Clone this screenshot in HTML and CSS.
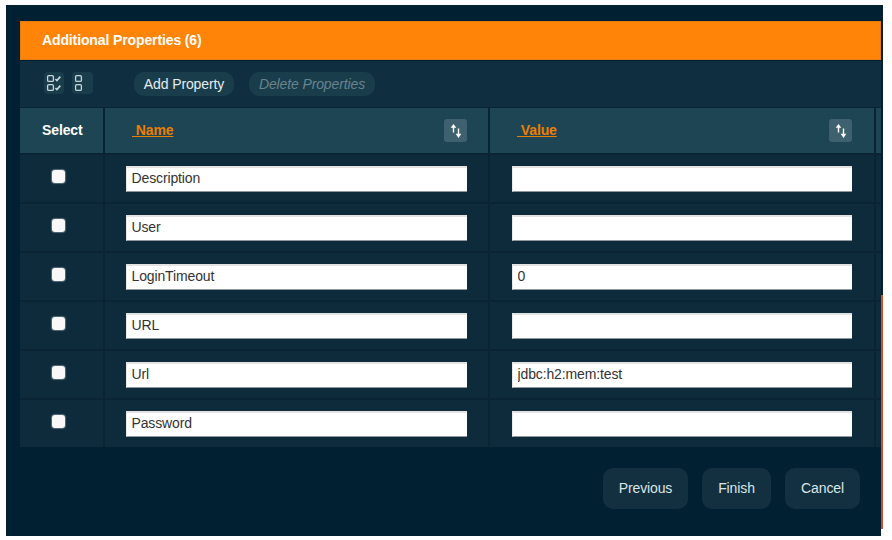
FILE: index.html
```html
<!DOCTYPE html>
<html lang="en">
<head>
<meta charset="utf-8">
<title>Additional Properties</title>
<link rel="stylesheet" href="styles.css">
</head>
<body>
<main class="panel">
  <h2 class="title">Additional Properties (6)</h2>
  <div class="toolbar">
    <button class="icon-btn" type="button" aria-label="Select all">
      <svg width="20" height="22" viewBox="0 0 20 22" fill="none" stroke="#c8d6da">
        <rect x="3.6" y="3.6" width="5.8" height="5.8" rx="1.2" stroke-width="1.3"/>
        <rect x="3.6" y="12.6" width="5.8" height="5.8" rx="1.2" stroke-width="1.3"/>
        <path d="M11.4 7l1.5 1.5 3.4-3.9M11.4 16l1.5 1.5 3.4-3.9" stroke-width="1.7"/>
      </svg>
    </button>
    <button class="icon-btn" type="button" aria-label="Select none">
      <svg width="20" height="22" viewBox="0 0 20 22" fill="none" stroke="#c8d6da" stroke-width="1.3">
        <rect x="3.6" y="3.6" width="5.8" height="5.8" rx="1.2"/>
        <rect x="3.6" y="12.6" width="5.8" height="5.8" rx="1.2"/>
      </svg>
    </button>
    <button class="pill add" type="button">Add Property</button>
    <button class="pill del" type="button">Delete Properties</button>
  </div>
  <div class="grid">
    <div class="cell head select-head">Select</div>
    <div class="cell head sort-head name-head">
      <a class="sort-link" href="#">&nbsp;Name</a>
      <button class="sort-btn" type="button" aria-label="Sort by name">
        <svg width="14" height="16" viewBox="0 0 14 16" fill="#fff" stroke="none">
          <path d="M3.8 9.5V4.5h1.4v5zM4.5 1l2.8 3.8H1.7zM8.8 5.5h1.4v5.5H8.8zM9.5 15l-2.8-4.2h5.6z"/>
        </svg>
      </button>
    </div>
    <div class="cell head sort-head value-head">
      <a class="sort-link" href="#">&nbsp;Value</a>
      <button class="sort-btn" type="button" aria-label="Sort by value">
        <svg width="14" height="16" viewBox="0 0 14 16" fill="#fff" stroke="none">
          <path d="M3.8 9.5V4.5h1.4v5zM4.5 1l2.8 3.8H1.7zM8.8 5.5h1.4v5.5H8.8zM9.5 15l-2.8-4.2h5.6z"/>
        </svg>
      </button>
    </div>
    <div class="cell head"></div>

    <div class="cell check-cell"><input class="check" type="checkbox"></div>
    <div class="cell field-cell"><input class="field" type="text" value="Description"></div>
    <div class="cell field-cell value-cell"><input class="field" type="text" value=""></div>
    <div class="cell"></div>

    <div class="cell check-cell"><input class="check" type="checkbox"></div>
    <div class="cell field-cell"><input class="field" type="text" value="User"></div>
    <div class="cell field-cell value-cell"><input class="field" type="text" value=""></div>
    <div class="cell"></div>

    <div class="cell check-cell"><input class="check" type="checkbox"></div>
    <div class="cell field-cell"><input class="field" type="text" value="LoginTimeout"></div>
    <div class="cell field-cell value-cell"><input class="field" type="text" value="0"></div>
    <div class="cell"></div>

    <div class="cell check-cell"><input class="check" type="checkbox"></div>
    <div class="cell field-cell"><input class="field" type="text" value="URL"></div>
    <div class="cell field-cell value-cell"><input class="field" type="text" value=""></div>
    <div class="cell"></div>

    <div class="cell check-cell"><input class="check" type="checkbox"></div>
    <div class="cell field-cell"><input class="field" type="text" value="Url"></div>
    <div class="cell field-cell value-cell"><input class="field" type="text" value="jdbc:h2:mem:test"></div>
    <div class="cell"></div>

    <div class="cell check-cell"><input class="check" type="checkbox"></div>
    <div class="cell field-cell"><input class="field" type="text" value="Password"></div>
    <div class="cell field-cell value-cell"><input class="field" type="text" value=""></div>
    <div class="cell"></div>
  </div>
  <div class="footer">
    <button class="action prev" type="button">Previous</button>
    <button class="action finish" type="button">Finish</button>
    <button class="action cancel" type="button">Cancel</button>
  </div>
  <span class="edge"></span>
</main>
</body>
</html>
```
FILE: styles.css
```css
* { box-sizing: border-box; }

html, body { margin: 0; height: 100%; background: #fff; }

body {
  padding: 5px 9px 4px 6px;
  font-family: "Liberation Sans", Arial, sans-serif;
  font-size: 14px;
  letter-spacing: -0.12px;
  overflow: hidden;
}

.panel {
  position: relative;
  height: 531px;
  padding: 16px 2px 0 14px;
  background: #012032;
}

.title {
  margin: 0 0 1px;
  height: 39px;
  padding: 0 0 2px 21px;
  display: flex;
  align-items: center;
  background: #ff8408;
  border: 1px solid #e67c10;
  color: #fff;
  font-size: 14px;
  font-weight: bold;
}

.toolbar {
  height: 46px;
  display: flex;
  align-items: flex-start;
  padding: 11px 0 0 24px;
  background: #0f2e3f;
}

button { font-family: inherit; letter-spacing: inherit; border: 0; padding: 0; }

.icon-btn {
  width: 20px;
  height: 22px;
  margin-right: 8px;
  border-radius: 4px;
  background: #1a3d4c;
  display: block;
}
.icon-btn svg { display: block; }

.icon-btn + .icon-btn { margin-right: 41px; width: 21px; }

.pill {
  height: 24px;
  padding-bottom: 1px;
  border-radius: 10px;
  background: #1a3d4c;
  font-size: 14px;
}
.add { width: 100px; margin-right: 15px; color: #e4ecef; }
.del { width: 126px; color: #68838e; font-style: italic; }

.grid {
  display: grid;
  grid-template-columns: 83px 383px 384px 5px;
  grid-template-rows: 45px repeat(6, 47px);
  gap: 2px;
  padding-top: 1px;
  background: #0a2433;
}

.cell { background: #0d2b3b; min-width: 0; }

.head { background: #1e4554; }

.select-head {
  display: flex;
  align-items: center;
  padding: 0 0 2px 22px;
  color: #fff;
  font-weight: bold;
}

.sort-head {
  display: flex;
  align-items: center;
  justify-content: space-between;
  padding: 0 21px 0 27px;
}
.value-head { padding-right: 22px; }

.sort-link {
  margin-bottom: 2px;
  color: #e97f05;
  font-weight: bold;
  text-decoration: underline;
}

.sort-btn {
  width: 23px;
  height: 23px;
  border-radius: 3px;
  background: #3f616f;
  display: flex;
  align-items: center;
  justify-content: center;
}

.check-cell { padding: 15px 0 0 32px; }

.check {
  appearance: none;
  display: block;
  margin: 0;
  width: 13px;
  height: 13px;
  border-radius: 3px;
  background: #f8f8f8;
  box-shadow: 0 0 1px 1px rgba(255, 255, 255, 0.3);
}

.field-cell { padding: 11px 21px 0; }
.value-cell { padding: 11px 22px 0; }

.field {
  display: block;
  width: 100%;
  height: 26px;
  padding: 0 5px 3px 4.5px;
  border: 0;
  border-top: 2px solid #e2e2e2;
  border-left: 1px solid #e8e8e8;
  border-bottom: 1px solid #8d979c;
  background: #fff;
  color: #333;
  font-family: inherit;
  font-size: 14px;
  letter-spacing: -0.13px;
  border-radius: 0;
}

.footer {
  display: flex;
  justify-content: flex-end;
  gap: 14px;
  margin-top: 21px;
  padding-right: 21px;
}

.action {
  height: 41px;
  padding-bottom: 1px;
  border-radius: 10px;
  background: #12303f;
  color: #dbe5e8;
  font-size: 14px;
}
.prev { width: 85px; }
.finish { width: 69px; }
.cancel { width: 75px; }

.edge {
  position: absolute;
  top: 290px;
  right: 0;
  bottom: 0;
  width: 2px;
  background: linear-gradient(#c9502a 234px, #fff 234px);
}
```
